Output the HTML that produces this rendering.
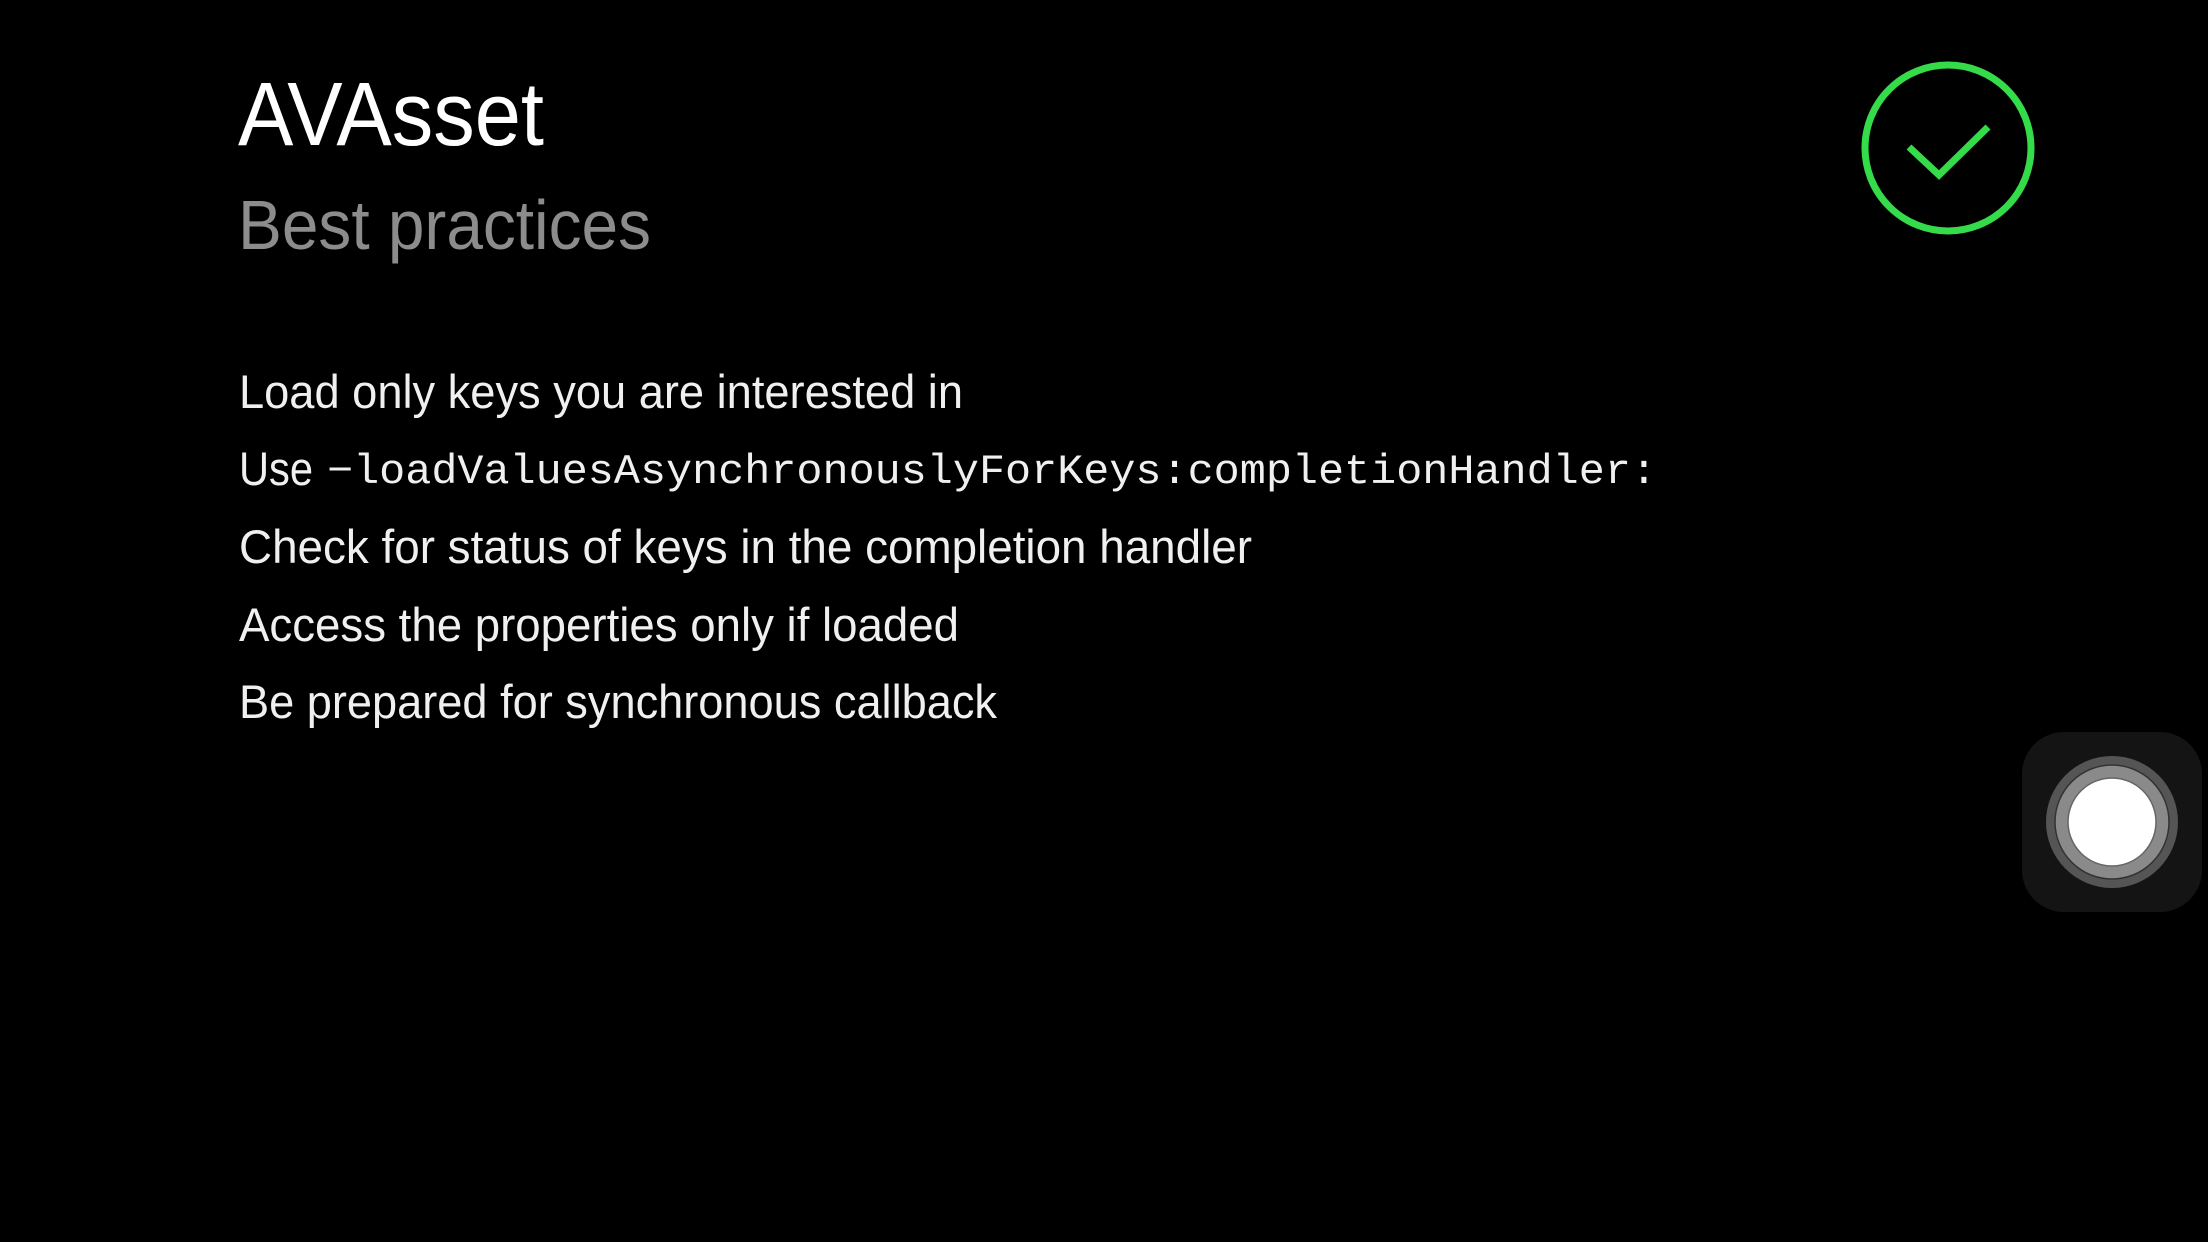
<!DOCTYPE html>
<html><head><meta charset="utf-8"><style>
html,body{margin:0;padding:0;background:#000;width:2208px;height:1242px;overflow:hidden}
svg{display:block}
text{font-family:"Liberation Sans",sans-serif}
.m{font-family:"Liberation Mono",monospace}
</style></head><body>
<svg width="2208" height="1242" viewBox="0 0 2208 1242" xmlns="http://www.w3.org/2000/svg">
<rect width="2208" height="1242" fill="#000"/>
<text x="238" y="145" font-size="90" fill="#fff" textLength="306" lengthAdjust="spacingAndGlyphs">AVAsset</text>
<text x="238" y="249" font-size="70" fill="#8c8c8c" textLength="413" lengthAdjust="spacingAndGlyphs">Best practices</text>
<g font-size="47" fill="#f0f0f0">
<text x="239" y="408" textLength="724" lengthAdjust="spacingAndGlyphs">Load only keys you are interested in</text>
<text x="239" y="485" textLength="74" lengthAdjust="spacingAndGlyphs">Use</text>
<text class="m" x="327" y="483" font-size="42" textLength="1330" lengthAdjust="spacingAndGlyphs">−loadValuesAsynchronouslyForKeys:completionHandler:</text>
<text x="239" y="563" textLength="1013" lengthAdjust="spacingAndGlyphs">Check for status of keys in the completion handler</text>
<text x="239" y="641" textLength="720" lengthAdjust="spacingAndGlyphs">Access the properties only if loaded</text>
<text x="239" y="718" textLength="758" lengthAdjust="spacingAndGlyphs">Be prepared for synchronous callback</text>
</g>
<circle cx="1948" cy="148" r="83" fill="none" stroke="#35dc4a" stroke-width="7"/>
<polyline points="1909,147 1939,175 1988,127" fill="none" stroke="#35dc4a" stroke-width="7"/>
<rect x="2022" y="732" width="180" height="180" rx="42" fill="#141414"/>
<circle cx="2112" cy="822" r="66" fill="#555"/>
<circle cx="2112" cy="822" r="57" fill="#8a8a8a" stroke="#333" stroke-width="1.5"/>
<circle cx="2112" cy="822" r="44" fill="#fff" stroke="#666" stroke-width="1.5"/>
</svg>
</body></html>
